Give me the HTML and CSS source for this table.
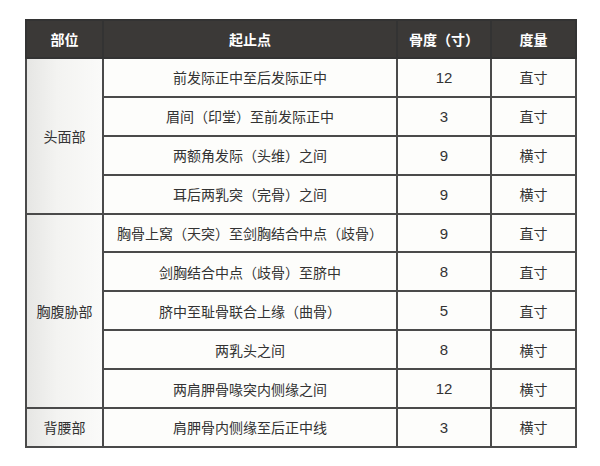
FILE: index.html
```html
<!DOCTYPE html>
<html lang="zh">
<head>
<meta charset="utf-8">
<link rel="stylesheet" href="styles.css">
</head>
<body>
<table class="bone">
  <colgroup>
    <col class="c1"><col class="c2"><col class="c3"><col class="c4">
  </colgroup>
  <thead>
    <tr><th>部位</th><th>起止点</th><th>骨度（寸）</th><th>度量</th></tr>
  </thead>
  <tbody>
    <tr><td class="part" rowspan="4">头面部</td><td class="pts">前发际正中至后发际正中</td><td class="num">12</td><td>直寸</td></tr>
    <tr><td class="pts">眉间（印堂）至前发际正中</td><td class="num">3</td><td>直寸</td></tr>
    <tr><td class="pts">两额角发际（头维）之间</td><td class="num">9</td><td>横寸</td></tr>
    <tr><td class="pts">耳后两乳突（完骨）之间</td><td class="num">9</td><td>横寸</td></tr>
    <tr><td class="part" rowspan="5">胸腹胁部</td><td class="pts">胸骨上窝（天突）至剑胸结合中点（歧骨）</td><td class="num">9</td><td>直寸</td></tr>
    <tr><td class="pts">剑胸结合中点（歧骨）至脐中</td><td class="num">8</td><td>直寸</td></tr>
    <tr><td class="pts">脐中至耻骨联合上缘（曲骨）</td><td class="num">5</td><td>直寸</td></tr>
    <tr><td class="pts">两乳头之间</td><td class="num">8</td><td>横寸</td></tr>
    <tr><td class="pts">两肩胛骨喙突内侧缘之间</td><td class="num">12</td><td>横寸</td></tr>
    <tr><td class="part">背腰部</td><td class="pts">肩胛骨内侧缘至后正中线</td><td class="num">3</td><td>横寸</td></tr>
  </tbody>
</table>
</body>
</html>
```
FILE: styles.css
```css
html, body {
  margin: 0;
  padding: 0;
  background: #ffffff;
}
body {
  padding: 19px 0 0 25px;
  font-family: "Liberation Sans", "Noto Sans CJK SC", sans-serif;
  font-size: 14px;
  color: #333333;
}
.bone {
  border-collapse: collapse;
  width: 550px;
  table-layout: fixed;
}
.c1 { width: 77px; }
.c2 { width: 294px; }
.c3 { width: 94px; }
.c4 { width: 85px; }
.bone th {
  background: #3b3937;
  color: #ffffff;
  font-weight: bold;
  height: 38px;
  padding: 0;
  text-align: center;
  border: 2px solid #333;
  box-sizing: border-box;
}
.bone td {
  height: 38.9px;
  padding: 0;
  text-align: center;
  vertical-align: middle;
  border: 2px solid #4a4a4a;
  box-sizing: border-box;
  background: #fdfdfb;
}
.bone td.pts {
  font-family: "Liberation Sans", "Noto Sans CJK TC", sans-serif;
}
.bone td.num {
  font-size: 15px;
}
.bone td.part {
  background: linear-gradient(90deg, #e6e6e4 0%, #f3f3f1 40%, #fafaf9 100%);
}
```
